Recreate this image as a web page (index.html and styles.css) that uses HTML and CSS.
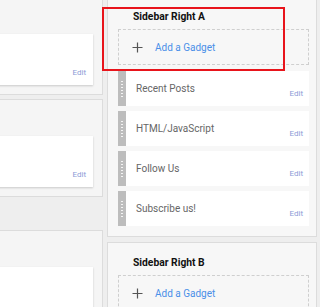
FILE: index.html
```html
<!DOCTYPE html>
<html lang="en">
<head>
    <meta charset="UTF-8">
    <meta name="viewport" content="width=device-width, initial-scale=1.0">
    <title>Layout</title>
    <link rel="stylesheet" href="styles.css">
</head>
<body>
    <div class="page">
        <div class="main-col">
            <div class="section first">
                <div class="post-card"><span class="edit">Edit</span></div>
            </div>
            <div class="section">
                <div class="post-card"><span class="edit">Edit</span></div>
            </div>
            <div class="section spaced">
                <div class="post-card tall"></div>
            </div>
        </div>

        <div class="side-col">
            <div class="sidebar first">
                <div class="sidebar-title">Sidebar Right A</div>
                <div class="add-gadget">
                    <svg class="plus" width="11" height="11" viewBox="0 0 11 11">
                        <path d="M5.5 0.5v10M0.5 5.5h10" stroke="#555" stroke-width="1.2" fill="none"/>
                    </svg>
                    <span>Add a Gadget</span>
                </div>
                <div class="widget">
                    <div class="handle"><span class="dots"></span></div>
                    <div class="widget-body"><span class="widget-name">Recent Posts</span><span class="edit">Edit</span></div>
                </div>
                <div class="widget">
                    <div class="handle"><span class="dots"></span></div>
                    <div class="widget-body"><span class="widget-name">HTML/JavaScript</span><span class="edit">Edit</span></div>
                </div>
                <div class="widget">
                    <div class="handle"><span class="dots"></span></div>
                    <div class="widget-body"><span class="widget-name">Follow Us</span><span class="edit">Edit</span></div>
                </div>
                <div class="widget">
                    <div class="handle"><span class="dots"></span></div>
                    <div class="widget-body"><span class="widget-name">Subscribe us!</span><span class="edit">Edit</span></div>
                </div>
            </div>
            <div class="sidebar">
                <div class="sidebar-title">Sidebar Right B</div>
                <div class="add-gadget">
                    <svg class="plus" width="11" height="11" viewBox="0 0 11 11">
                        <path d="M5.5 0.5v10M0.5 5.5h10" stroke="#555" stroke-width="1.2" fill="none"/>
                    </svg>
                    <span>Add a Gadget</span>
                </div>
            </div>
        </div>
    </div>

    <!-- highlight box -->
    <div class="highlight"></div>
</body>
</html>
```

FILE: styles.css
```css
body {
    font-family: Roboto, "Liberation Sans", Arial, sans-serif;
    background-color: #eeeeee;
    margin: 0;
    padding: 0;
    width: 320px;
    height: 307px;
    overflow: hidden;
    position: relative;
}
.page {
    display: flex;
    gap: 4px;
    align-items: flex-start;
}
.main-col {
    width: 133px;
    margin-left: -30px;
    flex-shrink: 0;
}
.section {
    background: #f5f5f5;
    border: 1px solid #dcdcdc;
    border-left: none;
    padding: 36px 9px 9px 10px;
    margin-top: 4px;
}
.section.first {
    margin-top: -3px;
}
.section.spaced {
    margin-top: 33px;
}
.post-card {
    background: #fff;
    height: 51px;
    box-shadow: 0 1px 2px rgba(0, 0, 0, 0.18);
    display: flex;
    justify-content: flex-end;
    align-items: flex-end;
    padding: 0 7px 8px 0;
    box-sizing: border-box;
}
.post-card.tall {
    height: 80px;
}
.edit {
    font-size: 8px;
    color: #8c9bd6;
}
.side-col {
    width: 210px;
    flex-shrink: 0;
}
.sidebar {
    background: #f7f7f7;
    border: 1px solid #dcdcdc;
    padding: 12px 7px 10px 10px;
    margin-top: 5px;
}
.sidebar.first {
    margin-top: -4px;
}
.sidebar-title {
    font-size: 10.3px;
    font-weight: bold;
    color: #111;
    line-height: 15px;
    padding-left: 15px;
}
.add-gadget {
    margin-top: 5px;
    height: 36px;
    box-sizing: border-box;
    border: 1px dashed #cfcfcf;
    display: flex;
    align-items: center;
    padding-left: 13px;
    gap: 12px;
    font-size: 10px;
    color: #4a8fe8;
}
.widget {
    display: flex;
    height: 35px;
    margin-top: 5px;
    background: #fff;
}
.add-gadget + .widget {
    margin-top: 6px;
}
.handle {
    width: 8px;
    background: #bdbdbd;
    position: relative;
}
.dots {
    position: absolute;
    left: 3px;
    top: 10px;
    width: 2px;
    height: 17px;
    background: repeating-linear-gradient(to bottom, #f4f4f4 0 1px, transparent 1px 3px);
}
.widget-body {
    flex: 1;
    display: flex;
    justify-content: space-between;
    padding: 10px 6px 0 10px;
}
.widget-name {
    font-size: 10px;
    color: #666;
    line-height: 15px;
}
.widget-body .edit {
    margin-top: 8px;
}
.highlight {
    position: absolute;
    left: 102px;
    top: 7px;
    width: 179px;
    height: 60px;
    border: 2px solid #e8141b;
}
```
